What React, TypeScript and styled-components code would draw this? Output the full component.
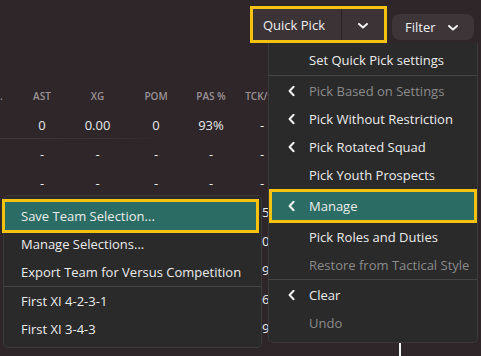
import React, { FC } from 'react';
import styled, { createGlobalStyle } from 'styled-components';

const GlobalStyle = createGlobalStyle`
	html, body {
		margin: 0;
		padding: 0;
		background: #2e2629;
	}
	body {
		font-family: 'Open Sans', 'Noto Sans', sans-serif;
		color: #ececec;
	}
`;

type Row = { cells: string[]; divider?: boolean };

const columns = ['.', 'AST', 'XG', 'POM', 'PAS %', 'TCK/90'];
const rows: Row[] = [
	{ cells: ['', '0', '0.00', '0', '93%', '-'], divider: true },
	{ cells: ['', '-', '-', '-', '-', '-'] },
	{ cells: ['', '-', '-', '-', '-', '-'] },
	{ cells: ['', '', '', '', '', '85'] },
	{ cells: ['', '', '', '', '', '70'] },
	{ cells: ['', '', '', '', '', '79'] },
	{ cells: ['', '', '', '', '', '86'] },
	{ cells: ['', '', '', '', '', '89'] },
];

type Item = { label: string; sub?: boolean; disabled?: boolean; active?: boolean; sep?: boolean };

const quickPickItems: Item[] = [
	{ label: 'Set Quick Pick settings', sep: true },
	{ label: 'Pick Based on Settings', sub: true, disabled: true },
	{ label: 'Pick Without Restriction', sub: true },
	{ label: 'Pick Rotated Squad', sub: true },
	{ label: 'Pick Youth Prospects' },
	{ label: 'Manage', sub: true, active: true },
	{ label: 'Pick Roles and Duties' },
	{ label: 'Restore from Tactical Style', disabled: true, sep: true },
	{ label: 'Clear', sub: true },
	{ label: 'Undo', disabled: true },
];

const manageItems: Item[] = [
	{ label: 'Save Team Selection...', active: true },
	{ label: 'Manage Selections...' },
	{ label: 'Export Team for Versus Competition', sep: true },
	{ label: 'First XI 4-2-3-1' },
	{ label: 'First XI 3-4-3' },
];

const ChevronDown: FC = () => (
	<svg width='10' height='6' viewBox='0 0 10 6' fill='none'>
		<path d='M1 1 L5 4.6 L9 1' stroke='#f2f2f2' strokeWidth='2' strokeLinecap='round' strokeLinejoin='round' />
	</svg>
);

const ChevronLeft: FC = () => (
	<svg width='7' height='11' viewBox='0 0 7 11' fill='none'>
		<path d='M5.6 1.2 L1.6 5.5 L5.6 9.8' stroke='#f2f2f2' strokeWidth='2' strokeLinecap='round' strokeLinejoin='round' />
	</svg>
);

const App: FC = () => {
	return (
		<Screen>
			<GlobalStyle />
			<Toolbar>
				<QuickPick>
					<QuickLabel>Quick Pick</QuickLabel>
					<QuickArrow>
						<ChevronDown />
					</QuickArrow>
				</QuickPick>
				<FilterButton>
					Filter
					<ChevronDown />
				</FilterButton>
			</Toolbar>

			<Table>
				<TableRow>
					{columns.map((c, i) => (
						<HeadCell key={i}>{c}</HeadCell>
					))}
				</TableRow>
				{rows.map((r, i) => (
					<TableRow key={i} $divider={r.divider}>
						{r.cells.map((c, j) => (
							<Cell key={j}>{c}</Cell>
						))}
					</TableRow>
				))}
			</Table>

			<Marker />

			<QuickMenu>
				{quickPickItems.map((it, i) => (
					<React.Fragment key={it.label}>
						<MenuItem
							$active={it.active}
							$disabled={it.disabled}
							$inset={40}
							$activeMargin={[3, 3, 3, 3]}
							$height={i === 0 ? 31 : 28}
						>
							<SubIcon $shift={it.active ? 3 : 0}>{it.sub && <ChevronLeft />}</SubIcon>
							{it.label}
						</MenuItem>
						{it.sep && <Separator $after={1} />}
					</React.Fragment>
				))}
			</QuickMenu>

			<ManageMenu>
				{manageItems.map((it) => (
					<React.Fragment key={it.label}>
						<MenuItem
							$active={it.active}
							$disabled={it.disabled}
							$inset={17}
							$activeMargin={[3, 5, 0, 1]}
							$height={28}
						>
							{it.label}
						</MenuItem>
						{it.sep && <Separator $after={0} />}
					</React.Fragment>
				))}
			</ManageMenu>
		</Screen>
	);
};

const Screen = styled.div`
	position: relative;
	width: 481px;
	height: 356px;
	overflow: hidden;
	background: #2e2629;
`;

const Toolbar = styled.div`
	display: flex;
	justify-content: flex-end;
	align-items: center;
	gap: 5px;
	padding: 6px 7px 0 0;
`;

const QuickPick = styled.div`
	display: flex;
	align-items: stretch;
	width: 131px;
	height: 31px;
	border: 3.5px solid #f4c20f;
	background: #3c3337;
`;

const QuickLabel = styled.div`
	display: flex;
	align-items: center;
	width: 89px;
	padding-left: 10px;
	box-sizing: border-box;
	font-size: 13px;
	color: #f0f0f0;
	border-right: 1px solid #2b2327;
`;

const QuickArrow = styled.div`
	flex: 1;
	display: flex;
	align-items: center;
	justify-content: center;
	padding-top: 3px;
`;

const FilterButton = styled.div`
	display: flex;
	align-items: center;
	gap: 12px;
	width: 82px;
	height: 26px;
	box-sizing: border-box;
	padding: 0 0 0 13px;
	margin-top: 4px;
	border-radius: 8px;
	background: #3e3539;
	font-size: 13px;
	color: #f0f0f0;

	svg {
		margin-top: 2px;
	}
`;

const Table = styled.div`
	display: flex;
	flex-direction: column;
	padding-top: 38px;
`;

const TableRow = styled.div<{ $divider?: boolean }>`
	position: relative;
	display: grid;
	grid-template-columns: 14px 56px 55px 62px 48px 54px;
	height: 29px;
	align-items: center;

	&::after {
		content: '';
		display: ${({ $divider }) => ($divider ? 'block' : 'none')};
		position: absolute;
		left: 0;
		bottom: 0;
		width: 160px;
		height: 1px;
		background: linear-gradient(90deg, rgba(255, 255, 255, 0.09), rgba(255, 255, 255, 0.06) 70%, rgba(255, 255, 255, 0));
	}
`;

const HeadCell = styled.div`
	text-align: center;
	font-size: 10px;
	font-weight: 600;
	color: #9c9296;
	white-space: nowrap;

	&:first-child {
		text-align: left;
	}
`;

const Cell = styled.div`
	text-align: center;
	font-size: 13px;
	color: #e9e9e9;
	white-space: nowrap;
`;

const Marker = styled.div`
	position: absolute;
	left: 399px;
	top: 340px;
	width: 2px;
	height: 16px;
	background: #f4f4f4;
`;

const Menu = styled.div`
	position: absolute;
	display: flex;
	flex-direction: column;
	background: #2a2a2a;
	border: 1px solid #3a3a3a;
	border-radius: 0 0 5px 5px;
	box-sizing: border-box;
`;

const QuickMenu = styled(Menu)`
	top: 43px;
	left: 268px;
	width: 210px;
	padding: 1px 0 5px;
	border-top: none;
`;

const ManageMenu = styled(Menu)`
	top: 195px;
	left: 3px;
	width: 259px;
	padding: 3px 0 4px;
	border-radius: 5px;
`;

const MenuItem = styled.div<{
	$active?: boolean;
	$disabled?: boolean;
	$inset: number;
	$activeMargin: [number, number, number, number];
	$height: number;
}>`
	position: relative;
	display: flex;
	align-items: center;
	height: ${({ $height }) => $height}px;
	flex-shrink: 0;
	padding-left: ${({ $inset, $active, $activeMargin }) => ($active ? $inset - $activeMargin[3] : $inset)}px;
	font-size: 13px;
	white-space: nowrap;
	color: ${({ $disabled }) => ($disabled ? '#8b8b8b' : '#ececec')};
	background: ${({ $active }) => ($active ? '#2b6c64' : 'transparent')};
	outline: ${({ $active }) => ($active ? '3.5px solid #f4c20f' : 'none')};
	margin: ${({ $active, $activeMargin }) => ($active ? $activeMargin.map((m) => `${m}px`).join(' ') : '0')};
`;

const SubIcon = styled.span<{ $shift: number }>`
	position: absolute;
	left: ${({ $shift }) => 19 - $shift}px;
	top: 50%;
	transform: translateY(-50%);
	display: flex;
`;

const Separator = styled.div<{ $after: number }>`
	height: 1px;
	flex-shrink: 0;
	margin-bottom: ${({ $after }) => $after}px;
	background: #454545;
`;

export default App;
